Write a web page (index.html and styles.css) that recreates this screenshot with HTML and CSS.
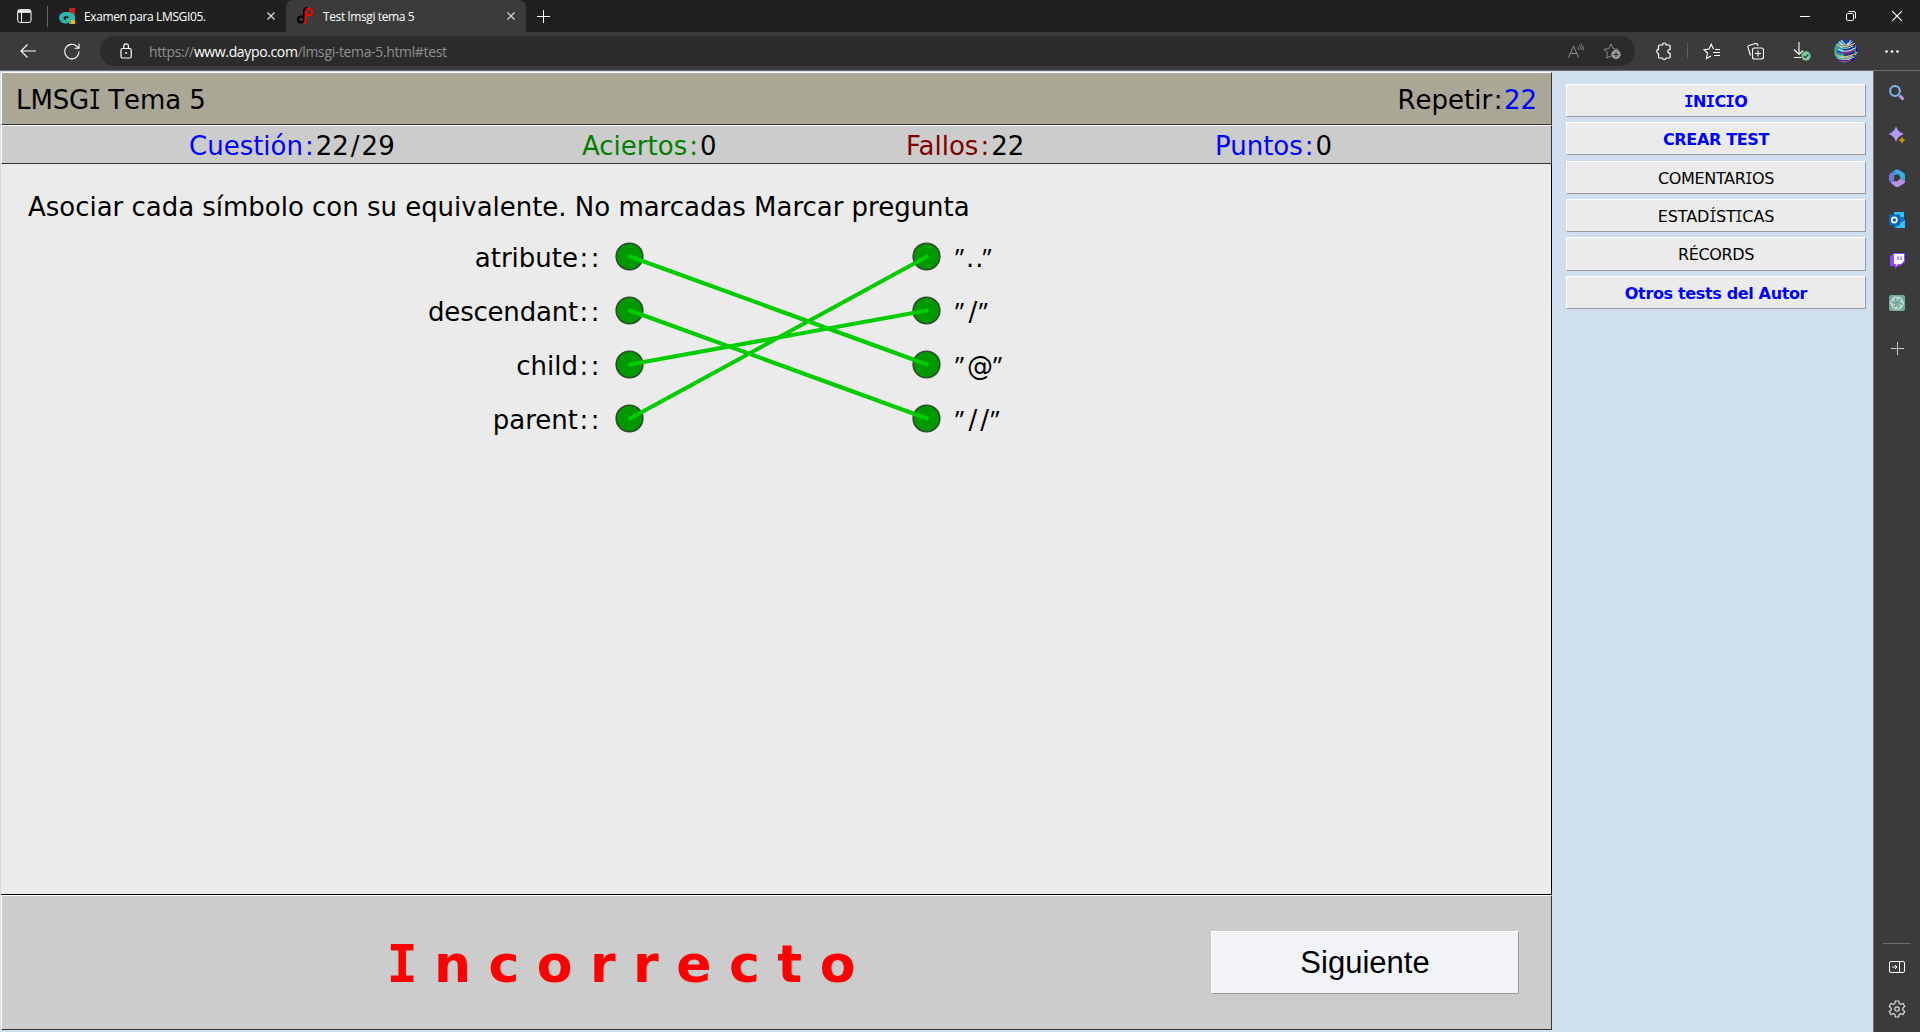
FILE: index.html
```html
<!DOCTYPE html>
<html lang="es">
<head>
<meta charset="utf-8">
<title>Test lmsgi tema 5</title>
<link rel="stylesheet" href="styles.css">
</head>
<body>
<header class="tabbar">
  <svg class="workspaces" width="15" height="14" viewBox="0 0 15 14" fill="none" stroke="#fff"><rect x=".7" y=".6" width="13.300" height="12.800" rx="2"/><path d="M1 2.500h12.500" stroke-width="2.500"/><path d="M4.500 3v10"/></svg>
  <span class="tab-sep"></span>
  <div class="tab tab-first">
    <svg width="16" height="16" viewBox="0 0 16 16"><path fill="#c4201c" d="M10 0h6v7l-6-2z"/><path fill="#f5b700" d="M10 12h6v4h-6z"/><path fill="#2fb5aa" d="M7 4C3 4 0 6.500 0 9.500S3 15.500 6 15.500c2 0 3-.5 4-1.500v2h2v-4h4V8c-1-3-4-4-9-4zm0 4c2 0 3 1 3 2H7v2c-2 0-2.500-1-2.500-2S5.500 8 7 8z"/></svg>
    <span class="tab-title">Examen para LMSGI05.</span>
    <svg class="x" width="8" height="8" viewBox="0 0 8 8" stroke="#ddd" stroke-width="1.200"><path d="M.5.5l7 7M7.500.5l-7 7"/></svg>
  </div>
  <div class="tab tab-active">
    <svg width="17" height="18" viewBox="0 0 17 18" fill="none" stroke-width="2"><circle cx="4" cy="12.500" r="3" stroke="#000"/><path d="M7 14V5q0-4 3-4" stroke="#000"/><circle cx="12" cy="5" r="3.400" stroke="#f00"/><path d="M8.600 5v8q0 3-2 3.500" stroke="#f00"/></svg>
    <span class="tab-title">Test lmsgi tema 5</span>
    <svg class="x" width="8" height="8" viewBox="0 0 8 8" stroke="#ddd" stroke-width="1.200"><path d="M.5.5l7 7M7.500.5l-7 7"/></svg>
  </div>
  <svg class="newtab" width="13" height="13" viewBox="0 0 13 13" stroke="#fff"><path d="M6.500 0v13M0 6.500h13"/></svg>
  <div class="winctl">
    <svg width="10" height="10" viewBox="0 0 10 10" stroke="#fff"><path d="M0 5.500h10"/></svg>
    <svg width="10" height="10" viewBox="0 0 10 10" fill="none" stroke="#fff"><rect x=".5" y="2.500" width="7" height="7" rx="1.200"/><path d="M2.500.5H8q1.500 0 1.500 1.500v5.500"/></svg>
    <svg width="10" height="10" viewBox="0 0 10 10" stroke="#fff" stroke-width="1.100"><path d="M0 0l10 10M10 0L0 10"/></svg>
  </div>
</header>
<nav class="toolbar">
  <svg class="back" width="16" height="14" viewBox="0 0 16 14" fill="none" stroke="#fff" stroke-width="1.100"><path d="M7.500.5L1 7l6.500 6.500M1 7h15"/></svg>
  <svg class="reload" width="16" height="17" viewBox="0 0 16 17" fill="none" stroke="#fff" stroke-width="1.100"><path d="M15 8.500a7.100 7.300 0 1 1-2.200-5.200L15 5.200M15 .5v4.700h-4.500"/></svg>
  <div class="address">
    <svg class="lock" width="12" height="16" viewBox="0 0 12 16" fill="none" stroke="#fff" stroke-width="1.200"><rect x="1" y="5.500" width="10.200" height="9.500" rx="1.500"/><path d="M3.800 5.500V3.200q0-2.400 2.300-2.400t2.300 2.400v2.300"/><circle cx="6.100" cy="10" r=".9" fill="#fff" stroke="none"/></svg>
    <span class="url">https://<b>www.daypo.com</b>/lmsgi-tema-5.html#test</span>
    <svg class="read" width="16" height="16" viewBox="0 0 16 16" fill="none" stroke="#8c8c8c"><path d="M.5 14.500L5.500 3l5 11.500M2.200 10.500h6.600"/><path d="M9.300 3.700q1.500 1 1.500 3M11 2q2.500 1.600 2.300 5M12.700.6q3 2.400 2.700 6.600"/></svg>
    <svg class="fav" width="18" height="18" viewBox="0 0 18 18" fill="none" stroke="#8c8c8c"><path d="M8 14l-4.500 2 1-5L1 7.300l4.700-.6L8 2l2.200 4.700 5 .7"/><circle cx="13" cy="12.500" r="4.700" fill="#9a9a9a" stroke="none"/><path d="M13 10v5M10.500 12.500h5" stroke="#2b2b2b"/></svg>
  </div>
  <svg class="ext" width="16" height="18" viewBox="0 0 16 18" fill="none" stroke="#fff" stroke-width="1.200"><path d="M3.500 3h3q0-2 1.800-2t1.800 2h3q1 0 1 1v3.500q-2.300.2-2.300 2t2.300 1.800V15q0 1-1 1h-3q-.3 1.500-1.900 1.500T6.500 16h-3q-1 0-1-1v-3.500Q.7 11 .7 9.300t1.800-1.900V4q0-1 1-1z"/></svg>
  <span class="tool-sep"></span>
  <svg class="favs" width="18" height="17" viewBox="0 0 18 17" fill="none" stroke="#fff" stroke-width="1.100"><path d="M10.500 6L8.200 1.200 6 6l-5 .7L4.500 10l-1 5.500L8 13M12 6.500h5M10 9.500h7M11 12.500h6"/></svg>
  <svg class="coll" width="17" height="17" viewBox="0 0 17 17" fill="none" stroke="#fff" stroke-width="1.100"><rect x="5.500" y="5" width="11" height="11" rx="2"/><path d="M11 7.500v6M8 10.500h6M3.500 12.500L1 4.500q-.4-1.500 1-2l6.500-2q1.500-.4 2 1L11 3"/></svg>
  <svg class="down" width="18" height="20" viewBox="0 0 18 20" fill="none" stroke="#fff" stroke-width="1.100"><path d="M6 1v12M1 8.500l5 5 4-4M1 16.500h7"/><circle cx="13" cy="15" r="4.700" fill="#7fc796" stroke="none"/><path d="M10.700 15l1.700 1.700 3-3.300" stroke="#234"/></svg>
  <svg class="avatar" width="24" height="24" viewBox="0 0 24 24" fill="none"><clipPath id="av"><circle cx="12" cy="12" r="11.800"/></clipPath><g clip-path="url(#av)"><path fill="#1b3f8f" d="M0 0h24v24H0z"/><path fill="#2a9bb0" d="M0 0h8l3 24H0z"/><path fill="#151f9c" d="M14 0h10v24h-6z"/><g stroke-width="1.100"><path stroke="#eac04b" d="M1 5q10 6 22-2M0 15q12 6 24-2M3 19q10 3 18-1"/><path stroke="#8fe8e4" d="M6 8q6 3 13-1M4 17q8 4 15 0M7 0q2 4 4 5M17 0q-1 4-4 5"/><path stroke="#e6e0f2" d="M4 10q8 5 17-1M5 21q7 1 13-1M5 3q3 3 6 3 5 0 8-4"/><path stroke="#1212c8" d="M3 12q9 5 19-1M2 20q10 4 19-1"/><path stroke="#d23a4a" d="M7 13.500q6 2 13-2M7 23q6 0 10-2"/><path stroke="#56c33b" d="M1 7q1 6 0 11M22 6q-2 6 0 11"/></g></g></svg>
  <svg class="more" width="14" height="3" viewBox="0 0 14 3" fill="#fff"><circle cx="1.500" cy="1.500" r="1.300"/><circle cx="7" cy="1.500" r="1.300"/><circle cx="12.500" cy="1.500" r="1.300"/></svg>
</nav>
<div class="body">
  <main class="quiz">
    <div class="panel title"><span class="name">LMSG<i class="cap">I</i> Tema 5</span><span>Repetir<i class="p">:</i><i class="blue">22</i></span></div>
    <div class="panel stats">
      <div><i class="blue">Cuestión<i class="p">:</i></i>22<i class="p">/</i>29</div>
      <div><i class="green">Aciertos<i class="p">:</i></i>0</div>
      <div><i class="maroon">Fallos<i class="p">:</i></i>22</div>
      <div><i class="blue">Puntos<i class="p">:</i></i>0</div>
    </div>
    <section class="question">
      <p>Asociar cada símbolo con su equivalente. No marcadas Marcar pregunta</p>
      <div class="match">
        <div class="left"><span>atribute<i class="cc">::</i></span><span class="long">descendant<i class="cc">::</i></span><span>child<i class="cc">::</i></span><span>parent<i class="cc">::</i></span></div>
        <svg class="links" width="330" height="216" viewBox="0 0 330 216">
          <g fill="#090" stroke="#2c4c2c" stroke-width="1.600"><circle cx="16.500" cy="26.500" r="13.300"/><circle cx="16.500" cy="80.500" r="13.300"/><circle cx="16.500" cy="134.500" r="13.300"/><circle cx="16.500" cy="188.500" r="13.300"/><circle cx="313.500" cy="26.500" r="13.300"/><circle cx="313.500" cy="80.500" r="13.300"/><circle cx="313.500" cy="134.500" r="13.300"/><circle cx="313.500" cy="188.500" r="13.300"/></g>
          <path stroke="#0c0" stroke-width="4" stroke-linecap="round" d="M17 26.500l297 108M17 80.500l297 108M17 134.500l297-54M17 188.500l297-162"/>
        </svg>
        <div class="right"><span><i class="q">”</i><i class="dots">..</i><i class="q">”</i></span><span><i class="q">”</i><i class="p">/</i><i class="q">”</i></span><span><i class="q">”</i>@<i class="q">”</i></span><span><i class="q">”</i><i class="p">/</i><i class="p">/</i><i class="q">”</i></span></div>
      </div>
    </section>
    <div class="panel result"><strong><i class="capb">I</i>ncorrecto</strong><button>Siguiente</button></div>
  </main>
  <aside class="menu">
    <a class="link"><i class="capb">I</i>N<i class="capb">I</i>C<i class="capb">I</i>O</a>
    <a class="link">CREAR TEST</a>
    <a class="gap">COMENTAR<i class="cap">I</i>OS</a>
    <a class="wide">ESTAD<i class="cap">Í</i>ST<i class="cap">I</i>CAS</a>
    <a class="tall">RÉCORDS</a>
    <a class="link">Otros tests del Autor</a>
  </aside>
  <aside class="edgebar">
    <svg width="16" height="16" viewBox="0 0 16 16" fill="none"><circle cx="6" cy="6" r="4.900" stroke="#7db8f5" stroke-width="2"/><path d="M10.500 10.500l4 4" stroke="#c49bea" stroke-width="3"/></svg>
    <svg width="18" height="18" viewBox="0 0 18 18"><defs><linearGradient id="sp" x2="1" y2="1"><stop stop-color="#8aa8ff"/><stop offset="1" stop-color="#d98be8"/></linearGradient></defs><path fill="url(#sp)" d="M8 0q1.500 6 8 8-6.500 2-8 8-1.500-6-7.500-8Q6.500 6 8 0z"/><path fill="#c8950c" d="M14 10.500q.8 3 3.500 3.700-2.700.8-3.500 3.500-.8-2.700-3.500-3.500 2.700-.7 3.500-3.700z"/></svg>
    <svg width="16" height="18" viewBox="0 0 16 18"><path fill="#6c79d9" d="M6 1L1 4.500Q0 5.500 0 7v5l5 2V6z"/><path fill="#38aee9" d="M6 1q2-1 4 0l5 3q1 1 1 2.500V12l-5-3.500V7L5 6z"/><path fill="#b990e8" d="M1 13l4 0 6-4 5 3q0 2-1 2.500l-5 3q-2 1-4 0z"/><path fill="#3b3b3b" d="M5.500 6.500l3-1.500 2.500 2v3l-3 2.500-2.500-1z"/></svg>
    <svg width="16" height="16" viewBox="0 0 16 16"><path fill="#0a78cf" d="M5 0h10v8l1 1v7H5z"/><path fill="#34bff5" d="M5 0h10v5H5zM10 12l6-4v8H6z"/><rect y="2.500" width="11" height="11" rx="1" fill="#0864b5"/><circle cx="5.300" cy="8" r="2.600" fill="none" stroke="#fff" stroke-width="1.600"/></svg>
    <svg width="15" height="16" viewBox="0 0 15 16"><path fill="#9146ff" d="M4 0h11v9l-5 4H8l-3 3v-3H0V3z"/><path fill="#fff" d="M4 1h10v7l-3 3H8l-2 2v-2H4z"/><path stroke="#9146ff" stroke-width="1.300" d="M8 3.500v3.500M11 3.500v3.500"/></svg>
    <svg class="gpt" width="16" height="16" viewBox="0 0 16 16" fill="none" stroke="#e5f4ee"><rect width="16" height="16" rx="2" fill="#74aa9c" stroke="none"/><g stroke-width=".8"><path id="petal" d="M8 5.500V4q0-2 2.200-2t2.800 3v3.500"/><use href="#petal" transform="rotate(60 8 8)"/><use href="#petal" transform="rotate(120 8 8)"/><use href="#petal" transform="rotate(180 8 8)"/><use href="#petal" transform="rotate(240 8 8)"/><use href="#petal" transform="rotate(300 8 8)"/></g></svg>
    <svg class="add" width="13" height="13" viewBox="0 0 13 13" stroke="#ccc"><path d="M6.500 0v13M0 6.500h13"/></svg>
    <div class="bottom">
      <span class="rule"></span>
      <svg width="16" height="12" viewBox="0 0 16 12" fill="none" stroke="#fff"><rect x=".5" y=".5" width="15" height="11" rx="1.500"/><path d="M10.500.5v11M3 6h5M6 4l2 2-2 2"/></svg>
      <svg class="gear" width="18" height="18" viewBox="0 0 18 18" fill="none" stroke="#ddd" stroke-width="1.200"><circle cx="9" cy="9" r="2.200"/><path d="M7.300 1h3.400l.5 2.600 1.300.8 2.500-.9 1.700 2.900-2 1.800v1.600l2 1.800-1.700 2.900-2.500-.9-1.300.8-.5 2.600H7.300l-.5-2.600-1.300-.8-2.500.9-1.700-2.900 2-1.800V8.200l-2-1.800L3 3.500l2.500.9 1.300-.8z"/></svg>
    </div>
  </aside>
</div>
</body>
</html>
```
FILE: styles.css
```css
* { box-sizing: border-box; }
body { margin: 0; width: 1920px; height: 1032px; overflow: hidden; display: flex; flex-direction: column; background: #3b3b3b; font-family: "DejaVu Sans", sans-serif; color: #000; }
svg { display: block; flex: none; }
i { font-style: normal; }

/* Browser chrome */
.tabbar { flex: none; height: 32px; background: #202020; display: flex; align-items: center; color: #fff; font: 12px "Open Sans", sans-serif; }
.workspaces { margin-left: 17px; }
.tab-sep { width: 1px; height: 21px; margin-left: 15px; margin-right: 1px; background: #666; }
.tab { display: flex; align-items: center; height: 32px; }
.tab-first { width: 237px; padding-left: 10px; }
.tab-active { width: 240px; padding-left: 11px; background: #3b3b3b; border-radius: 7px 7px 0 0; }
.tab-title { margin-left: 9px; white-space: nowrap; letter-spacing: -.38px; }
.tab .x { margin-left: auto; margin-right: 11px; }
.newtab { margin-left: 11px; }
.winctl { margin-left: auto; margin-right: 18px; display: flex; gap: 36px; }
.toolbar { flex: none; height: 39px; background: #3b3b3b; border-bottom: 1px solid #6e6e6e; display: flex; align-items: center; }
.back { margin-left: 20px; }
.reload { margin-left: 28px; }
.address { width: 1535px; height: 30px; margin-left: 20px; border-radius: 15px; background: #2b2b2b; display: flex; align-items: center; padding: 0 14px 0 20px; }
.url { margin-left: 17px; color: #8f8f8f; font: 14px "Open Sans", sans-serif; white-space: nowrap; letter-spacing: -.36px; }
.url b { color: #fff; font-weight: 400; }
.read { margin-left: auto; margin-right: 19px; }
.ext { margin-left: 21px; }
.tool-sep { width: 1px; height: 16px; margin: 0 15px 0 15px; background: #5c5c5c; }
.coll { margin-left: 26px; }
.down { margin-left: 29px; }
.avatar { margin-left: 23px; }
.more { margin-left: 27px; }

/* Quiz */
.body { flex: 1; display: flex; background: #d0dfee; }
.quiz { width: 1552px; padding: 1px 0 2px 1px; display: flex; flex-direction: column; font-size: 26px; }
.panel { border: 1px solid #333; border-top-color: #fff; border-left-color: #fff; background: #ccc; display: flex; align-items: center; }
.title { height: 53px; background: #aaa797; justify-content: space-between; padding: 2px 14px 0; font-kerning: none; }
.name { letter-spacing: -.1px; }
.stats { height: 39px; display: grid; grid-template-columns: 393px 324px 309px 1fr; padding: 2px 0 0 187px; }
.blue { color: #00f; }
.green { color: #008000; }
.maroon { color: #800000; }
.p { padding: 0 1.5px; }
.stats .p { padding: 0 2px; }
.cc { letter-spacing: 2.5px; padding-left: 1.5px; margin-right: -2px; }
.long { letter-spacing: -.2px; }
.cap, .capb { display: inline-block; font-family: "DejaVu Sans Mono", monospace; line-height: 1; }
.cap { margin: 0 -.09em; transform: scaleX(.8); }
.capb { margin: 0 -.028em; }
.question { flex: 1; background: #ebebeb; border-right: 1px solid #000; border-bottom: 1px solid #000; padding: 26px 0 0 27px; }
.question p { margin: 0; line-height: 34px; white-space: nowrap; letter-spacing: -.02px; }
.match { display: flex; margin-top: 6px; line-height: 54px; }
.left, .right { display: flex; flex-direction: column; padding-top: 1px; }
.left span, .right span { height: 54px; }
.left { width: 572px; text-align: right; }
.links { margin-left: 13px; }
.right { margin-left: 12px; }
.q { display: inline-block; width: 12px; font-family: "Open Sans", sans-serif; line-height: 1; }
.dots { letter-spacing: 1px; margin-left: -1px; margin-right: -2px; }
.result { height: 135px; justify-content: space-between; padding: 0 32px 0 386px; }
.result strong { color: #f00; font-size: 52px; letter-spacing: 17.5px; line-height: 60px; padding-top: 2px; }
.result button { width: 308px; height: 63px; background: #f1f3f7; border: 1px solid #999; border-top-color: #fff; border-left-color: #fff; padding: 0; font: 31px "Liberation Sans", sans-serif; color: #000; }

/* Site menu */
.menu { width: 322px; border-right: 1px solid #6e6e6e; padding: 13px 7px 0 14px; display: flex; flex-direction: column; gap: 5px; font-size: 16px; }
.menu a { height: 33px; border: 1px solid #999; border-top-color: #fff; border-left-color: #fff; background: #ebebeb; text-align: center; line-height: 33px; letter-spacing: -.35px; }
.menu .link { color: #00f; font-weight: 700; }
.menu .gap { margin-top: 1px; }
.menu .wide { letter-spacing: -.1px; }
.menu .tall { height: 34px; }

/* Browser side bar */
.edgebar { flex: 1; background: #3b3b3b; display: flex; flex-direction: column; align-items: center; gap: 25px; padding-top: 14px; }
.gpt { margin-top: 1px; }
.add { margin-top: 6px; }
.bottom { margin-top: auto; display: flex; flex-direction: column; align-items: center; gap: 17px; padding-bottom: 14px; }
.rule { width: 28px; height: 1px; background: #6e6e6e; }
.gear { margin-top: 10px; }
```
